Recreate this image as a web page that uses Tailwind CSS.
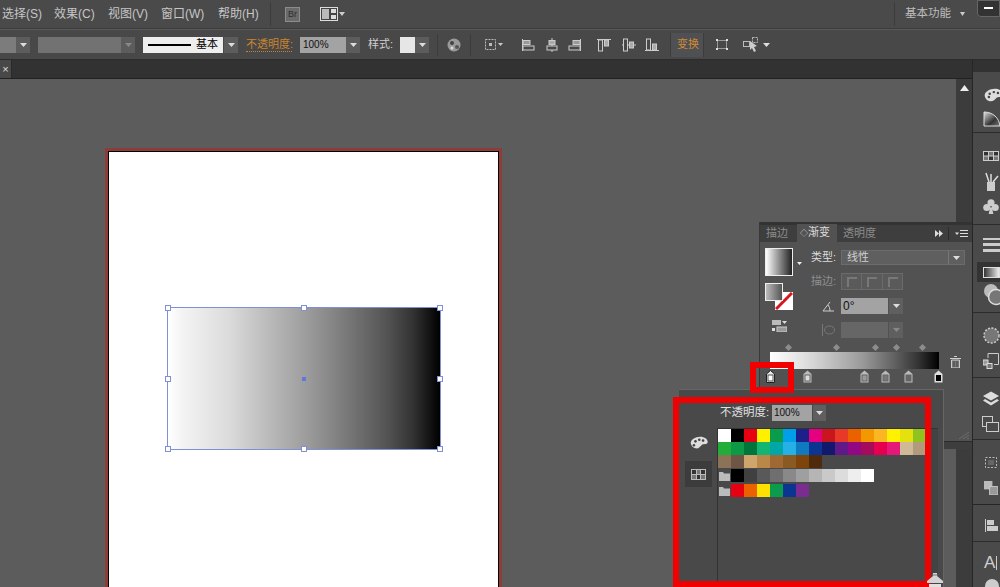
<!DOCTYPE html>
<html lang="zh-CN">
<head>
<meta charset="UTF-8" />
<title>Illustrator 渐变</title>
<script src="https://cdn.jsdelivr.net/npm/@tailwindcss/browser@4"></script>
</head>
<body class="bg-[#5c5c5c]">
<div class="relative w-[1000px] h-[587px] overflow-hidden flex flex-col bg-[#4a4a4a] text-[#cfcfcf] text-[11px] font-['Liberation_Sans','Noto_Sans_CJK_SC',sans-serif]">

  <!-- menu bar -->
  <div class="h-[29px] shrink-0 flex items-center bg-[#4a4a4a] border-b border-[#3a3a3a] text-[12px] text-[#c6c6c6]">
    <span class="ml-[2px] w-[52px]">选择(S)</span>
    <span class="w-[54px]">效果(C)</span>
    <span class="w-[53px]">视图(V)</span>
    <span class="w-[57px]">窗口(W)</span>
    <span class="w-[52px]">帮助(H)</span>
    <div class="w-px h-[24px] bg-[#3c3c3c]"></div>
    <div class="ml-[14px] w-[15px] h-[15px] bg-[#6a6a6a] border border-[#8c8c8c] flex items-center justify-center text-[9px] leading-none text-[#2e2e2e]">Br</div>
    <svg class="ml-[20px]" width="25" height="14" viewBox="0 0 25 14"><rect x=".5" y=".5" width="17" height="13" fill="#444" stroke="#ddd"/><rect x="2" y="2" width="7" height="10" fill="#bbb"/><rect x="11" y="2" width="5" height="4" fill="#ddd"/><rect x="11" y="8" width="5" height="4" fill="#ddd"/><path d="M19 5h6l-3 4z" fill="#ccc"/></svg>
    <div class="ml-auto w-px h-[24px] bg-[#3c3c3c]"></div>
    <span class="ml-[10px] w-[45px] text-[11.5px] whitespace-nowrap text-[#bdbdbd]">基本功能</span>
    <svg class="ml-[10px]" width="5" height="4" viewBox="0 0 5 4"><path d="M0 0h5L2.500 4z" fill="#ccc"/></svg>
    <div class="ml-[12px] w-[23px] h-[17px] -mt-[12px] bg-[#333] border border-[#666] rounded-bl-sm flex items-center justify-center"><div class="w-[9px] h-[2px] bg-white"></div></div>
  </div>

  <!-- options bar -->
  <div class="h-[31px] shrink-0 flex items-center bg-[#484848] border-t border-[#5a5a5a] border-b-[#2c2c2c] border-b">
    <div class="w-[16px] h-[16px] bg-[#7c7c7c]"></div>
    <div class="w-[14px] h-[16px] bg-[#5c5c5c] flex items-center justify-center"><svg width="7" height="4"><path d="M0 0h7L3.500 4z" fill="#ddd"/></svg></div>
    <div class="ml-[8px] w-[83px] h-[16px] bg-[#727272]"></div>
    <div class="w-[14px] h-[16px] bg-[#5c5c5c] flex items-center justify-center"><svg width="7" height="4"><path d="M0 0h7L3.500 4z" fill="#888"/></svg></div>
    <div class="ml-[8px] w-[80px] h-[16px] bg-[#eeeeee] flex items-center text-black">
      <div class="ml-[5px] w-[43px] h-[2px] bg-black"></div>
      <span class="ml-[5px]">基本</span>
    </div>
    <div class="ml-px w-[14px] h-[16px] bg-[#5c5c5c] flex items-center justify-center"><svg width="7" height="4"><path d="M0 0h7L3.500 4z" fill="#ddd"/></svg></div>
    <span class="ml-[8px] w-[46px] text-[#c8842f] border-b border-dotted border-[#c8842f] leading-[13px] whitespace-nowrap">不透明度:</span>
    <div class="ml-[8px] w-[46px] h-[16px] bg-[#a3a3a3] text-[#111] text-[10px] leading-[16px] pl-[3px]">100%</div>
    <div class="w-[14px] h-[16px] bg-[#5c5c5c] flex items-center justify-center"><svg width="7" height="4"><path d="M0 0h7L3.500 4z" fill="#ddd"/></svg></div>
    <span class="ml-[8px] w-[32px] text-[#cfcfcf]">样式:</span>
    <div class="w-[15px] h-[16px] bg-[#e6e6e6]"></div>
    <div class="w-[14px] h-[16px] bg-[#5c5c5c] flex items-center justify-center"><svg width="7" height="4"><path d="M0 0h7L3.500 4z" fill="#ddd"/></svg></div>
    <div class="ml-[8px] w-px h-[22px] bg-[#3c3c3c]"></div>
    <svg class="ml-[9px]" width="14" height="14" viewBox="0 0 14 14"><circle cx="7" cy="7" r="6.500" fill="#9a9a9a"/><circle cx="5" cy="5" r="2" fill="#444"/><circle cx="10" cy="9" r="2" fill="#555"/><circle cx="5" cy="10" r="1.500" fill="#ddd"/></svg>
    <div class="ml-[9px] w-px h-[22px] bg-[#3c3c3c]"></div>
    <svg class="ml-[13px]" width="20" height="13" viewBox="0 0 20 13"><rect x="1.500" y="1.500" width="10" height="10" fill="none" stroke="#bbb" stroke-dasharray="2 1"/><rect x="5" y="5" width="3" height="3" fill="#bbb"/><path d="M14 5h5l-2.500 3z" fill="#ccc"/></svg>
    <!-- align -->
    <svg class="ml-[17px]" width="14" height="14" viewBox="0 0 14 14"><path d="M1.500 1v12" stroke="#ccc"/><rect x="2" y="2.500" width="7" height="4" fill="#999" stroke="#ccc"/><rect x="2" y="8" width="11" height="4" fill="none" stroke="#ccc"/></svg>
    <svg class="ml-[10px]" width="14" height="14" viewBox="0 0 14 14"><path d="M7 0v14" stroke="#ccc"/><rect x="4" y="2.500" width="6" height="4" fill="#aaa" stroke="#ccc"/><rect x="2" y="8" width="10" height="4" fill="#484848" stroke="#ccc"/></svg>
    <svg class="ml-[9px]" width="14" height="14" viewBox="0 0 14 14"><path d="M12.500 1v12" stroke="#ccc"/><rect x="5" y="2.500" width="7" height="4" fill="#999" stroke="#ccc"/><rect x="1" y="8" width="11" height="4" fill="none" stroke="#ccc"/></svg>
    <svg class="ml-[15px]" width="14" height="14" viewBox="0 0 14 14"><path d="M0 1.500h14" stroke="#ccc"/><rect x="1.500" y="2" width="4" height="11" fill="none" stroke="#ccc"/><rect x="7.500" y="2" width="4" height="6" fill="#aaa" stroke="#ccc"/></svg>
    <svg class="ml-[11px]" width="14" height="14" viewBox="0 0 14 14"><path d="M0 7h14" stroke="#ccc"/><rect x="1.500" y="1" width="4" height="12" fill="#484848" stroke="#ccc"/><rect x="7.500" y="4" width="4" height="6" fill="#aaa" stroke="#ccc"/></svg>
    <svg class="ml-[9px]" width="14" height="14" viewBox="0 0 14 14"><path d="M0 12.500h14" stroke="#ccc"/><rect x="1.500" y="1" width="4" height="11" fill="none" stroke="#ccc"/><rect x="7.500" y="6" width="4" height="6" fill="#aaa" stroke="#ccc"/></svg>
    <div class="ml-[11px] w-[34px] h-[24px] shrink-0 bg-[#4e5054] border-x border-[#3c3c3c] flex items-center pl-[6px] text-[#d08a34] whitespace-nowrap">变换</div>
    <svg class="ml-[11px]" width="14" height="13" viewBox="0 0 14 13"><rect x="2.500" y="2.500" width="9" height="8" fill="none" stroke="#999"/><rect x="1" y="1" width="2" height="2" fill="#ddd"/><rect x="11" y="1" width="2" height="2" fill="#ddd"/><rect x="1" y="10" width="2" height="2" fill="#ddd"/><rect x="11" y="10" width="2" height="2" fill="#ddd"/></svg>
    <svg class="ml-[14px]" width="16" height="15" viewBox="0 0 16 15"><rect x=".5" y="4.500" width="6" height="5" fill="none" stroke="#bbb"/><rect x="9.500" y=".5" width="5" height="5" fill="none" stroke="#bbb" stroke-dasharray="2 1"/><path d="M7 4l7 5-3 1 2 4-2 1-2-4-2 2z" fill="#ccc"/></svg>
    <svg class="ml-[4px]" width="7" height="4"><path d="M0 0h7L3.500 4z" fill="#ddd"/></svg>
  </div>

  <!-- workspace -->
  <div class="flex-1 flex min-h-0">
    <div class="w-[972px] shrink-0 flex flex-col">
      <div class="h-[19px] shrink-0 flex bg-[#323232] border-b border-[#222]">
        <div class="w-[12px] h-full bg-[#484848] border-r border-[#2a2a2a] flex items-center justify-center text-[11px] leading-none text-[#ddd]">×</div>
      </div>
      <div class="flex-1 flex min-h-0">
        <div class="w-[956px] relative bg-[#5c5c5c] overflow-hidden">
          <!-- artboard: top 79 of page -->
          <div class="absolute left-[105px] top-[69px] w-[397px] h-[460px] border-x-[3px] border-t-[3px] border-[#8e3c3a] bg-black pt-px px-px">
            <div class="w-full h-full bg-white"></div>
          </div>
          <!-- selected rectangle -->
          <div class="absolute left-[167px] top-[228px] w-[274px] h-[143px] border border-[#7f8fd8] bg-[linear-gradient(to_right,#fff_0%,#f4f4f4_5%,#dcdcdc_22%,#b8b8b8_38%,#9a9a9a_52%,#787878_66%,#555_80%,#333_90%,#000_100%)]">
            <div class="absolute -left-[3px] -top-[3px] w-[6px] h-[6px] bg-white border border-[#7f8fd8]"></div>
            <div class="absolute left-[133px] -top-[3px] w-[6px] h-[6px] bg-white border border-[#7f8fd8]"></div>
            <div class="absolute -right-[3px] -top-[3px] w-[6px] h-[6px] bg-white border border-[#7f8fd8]"></div>
            <div class="absolute -left-[3px] top-[68px] w-[6px] h-[6px] bg-white border border-[#7f8fd8]"></div>
            <div class="absolute -right-[3px] top-[68px] w-[6px] h-[6px] bg-white border border-[#7f8fd8]"></div>
            <div class="absolute -left-[3px] -bottom-[3px] w-[6px] h-[6px] bg-white border border-[#7f8fd8]"></div>
            <div class="absolute left-[133px] -bottom-[3px] w-[6px] h-[6px] bg-white border border-[#7f8fd8]"></div>
            <div class="absolute -right-[3px] -bottom-[3px] w-[6px] h-[6px] bg-white border border-[#7f8fd8]"></div>
            <div class="absolute left-[134px] top-[69px] w-[4px] h-[4px] bg-[#5f78e0]"></div>
          </div>
        </div>
        <!-- vertical scrollbar -->
        <div class="w-[16px] bg-[#3c3c3c] flex justify-center pt-[6px]">
          <svg width="9" height="6"><path d="M0 6h9L4.500 0z" fill="#eee"/></svg>
        </div>
      </div>
    </div>
    <div class="w-px bg-[#262626] shrink-0"></div>

    <!-- right dock -->
    <div class="flex-1 flex flex-col overflow-hidden">
      <div class="h-[12px] bg-[#323232] shrink-0"></div>
      <div class="flex flex-col items-start pl-[9px] h-[61px] border-b border-[#2c2c2c] pt-[16px] shrink-0">
        <svg width="22" height="14" viewBox="0 0 24 17" class="shrink-0"><path d="M2 10C1 5 8 1 14 1s10 3 10 7-6 2-8 4-4 5-8 4-5-3-6-6z" fill="#ddd"/><circle cx="8" cy="7" r="1.500" fill="#444"/><circle cx="13" cy="5" r="1.500" fill="#444"/><circle cx="18" cy="6" r="1.500" fill="#444"/><circle cx="7" cy="11" r="1.500" fill="#444"/></svg>
        <svg class="mt-[9px] ml-px shrink-0" width="18" height="16" viewBox="0 0 18 16"><defs><linearGradient id="q" x1="0" y1="0" x2="1" y2="1"><stop offset="0" stop-color="#ddd"/><stop offset=".6" stop-color="#333"/><stop offset="1" stop-color="#777"/></linearGradient></defs><path d="M1 1c9 0 15 6 16 14H1z" fill="url(#q)" stroke="#ddd"/></svg>
      </div>
      <div class="flex flex-col items-start pl-[10px] h-[92px] border-b border-[#2c2c2c] pt-[18px] shrink-0">
        <svg width="16" height="10" viewBox="0 0 16 10" class="shrink-0"><rect width="16" height="10" fill="#ccc"/><rect x="1" y="1" width="4" height="3.500" fill="#333"/><rect x="6" y="1" width="4" height="3.500" fill="#777"/><rect x="11" y="1" width="4" height="3.500" fill="#333"/><rect x="1" y="5.500" width="4" height="3.500" fill="#777"/><rect x="6" y="5.500" width="4" height="3.500" fill="#333"/><rect x="11" y="5.500" width="4" height="3.500" fill="#777"/></svg>
        <svg class="mt-[11px] shrink-0" width="16" height="19" viewBox="0 0 16 19"><rect x="4" y="10" width="8" height="9" fill="#ccc"/><path d="M6 10L3 1M8 10V2M10 10l5-6" stroke="#ddd" stroke-width="1.500"/></svg>
        <svg class="mt-[8px] shrink-0" width="16" height="15" viewBox="0 0 17 16"><circle cx="8.500" cy="4" r="3.800" fill="#ccc"/><circle cx="4" cy="9" r="3.800" fill="#ccc"/><circle cx="13" cy="9" r="3.800" fill="#ccc"/><path d="M7.500 9h2l1.500 7H6z" fill="#ccc"/></svg>
      </div>
      <div class="flex flex-col items-start h-[88px] border-b border-[#2c2c2c] pt-[13px] shrink-0">
        <div class="ml-[10px] w-[17px] h-[14px] flex flex-col justify-between shrink-0"><div class="h-[2px] bg-[#ccc]"></div><div class="h-[3px] bg-[#ccc]"></div><div class="h-[3px] bg-[#ccc]"></div></div>
        <div class="mt-[10px] ml-[4px] w-[23px] h-[20px] bg-[#333] flex items-center pl-[6px] shrink-0"><div class="w-[17px] h-[11px] border border-[#ddd] bg-[linear-gradient(to_right,#333,#eee)]"></div></div>
        <svg class="mt-px ml-[10px] shrink-0" width="19" height="23" viewBox="0 0 19 23"><circle cx="8" cy="8" r="7" fill="#bbb"/><circle cx="13" cy="14" r="7.500" fill="#777" stroke="#ddd" stroke-width="1.500"/></svg>
      </div>
      <div class="flex flex-col items-start pl-[10px] h-[65px] border-b border-[#2c2c2c] pt-[14px] shrink-0">
        <svg width="17" height="17" viewBox="0 0 17 17" class="shrink-0"><circle cx="8.500" cy="8.500" r="7.500" fill="#777" stroke="#ccc" stroke-width="1.500" stroke-dasharray="2 1.500"/></svg>
        <svg class="mt-[9px] shrink-0" width="16" height="16" viewBox="0 0 16 16"><path d="M5 5V.5h10.500v11H11" fill="none" stroke="#ccc"/><rect x="0" y="7" width="5" height="5" fill="#999" stroke="#ddd"/><rect x="4" y="10.500" width="5" height="5" fill="#777" stroke="#ddd"/></svg>
      </div>
      <div class="flex flex-col items-start pl-[10px] h-[62px] border-b border-[#2c2c2c] pt-[13px] shrink-0">
        <svg width="16" height="15" viewBox="0 0 16 14" class="shrink-0"><path d="M8 0l8 4.500-8 4.500-8-4.500z" fill="#ddd"/><path d="M2 7.500l6 3.500 6-3.500 2 1.500-8 5-8-5z" fill="#ddd"/></svg>
        <svg class="mt-[10px] -ml-px shrink-0" width="17" height="16" viewBox="0 0 17 16"><rect x=".5" y=".5" width="10" height="10" fill="none" stroke="#ccc"/><rect x="4.500" y="6.500" width="12" height="9" fill="#4a4a4a" stroke="#ccc"/></svg>
      </div>
      <div class="flex flex-col items-start pl-[11px] h-[65px] border-b border-[#262626] pt-[16px] shrink-0">
        <svg width="14" height="13" viewBox="0 0 14 13" class="shrink-0"><rect x="1.500" y="1.500" width="11" height="10" fill="none" stroke="#bbb" stroke-dasharray="2 1.500"/><rect x="4" y="4" width="6" height="5" fill="#666"/></svg>
        <svg class="mt-[12px] shrink-0" width="14" height="14" viewBox="0 0 15 15"><rect x="0" y="0" width="9" height="9" fill="#bbb"/><rect x="6" y="6" width="9" height="9" fill="#999" stroke="#ccc"/></svg>
      </div>
      <div class="flex flex-col items-start pl-[12px] h-[37px] border-b border-[#2c2c2c] pt-[14px] shrink-0">
        <svg width="13" height="13" viewBox="0 0 13 13" class="shrink-0"><path d="M.5 0v13" stroke="#ccc"/><rect x="2" y="1" width="7" height="5" fill="#ccc"/><rect x="2" y="7" width="11" height="5" fill="#ccc"/></svg>
      </div>
      <div class="pl-[11px] pt-[9px] flex items-center text-[17px] leading-[24px] text-[#cfcfcf] shrink-0">A<div class="w-px h-[14px] bg-[#ccc] ml-px"></div></div>
      <div class="ml-[12px] mt-[4px] w-[14px] h-[8px] bg-[#ccc] rounded-t-full shrink-0"></div>
    </div>
  </div>

  <!-- gradient panel -->
  <div class="absolute left-[759px] top-[222px] w-[213px] h-[219px] bg-[#525252] border-l border-[#3a3a3a] flex flex-col">
    <div class="h-[20px] shrink-0 flex items-end bg-[#3e3e3e] border-t-[3px] border-[#333]">
      <span class="w-[37px] pl-[6px] leading-[17px] text-[#8c8c8c] whitespace-nowrap">描边</span>
      <span class="w-[40px] pl-[3px] leading-[17px] bg-[#525252] text-[#dcdcdc] whitespace-nowrap"><span class="text-[8px]">◇</span>渐变</span>
      <span class="ml-[6px] leading-[17px] text-[#8c8c8c] whitespace-nowrap">透明度</span>
      <svg class="ml-auto mb-[5px]" width="8" height="7"><path d="M0 0l4 3.500L0 7zM4 0l4 3.500L4 7z" fill="#ddd"/></svg>
      <div class="ml-[5px] mb-[2px] w-px h-[13px] bg-[#2c2c2c]"></div>
      <svg class="ml-[6px] mr-[4px] mb-[4px]" width="13" height="8"><path d="M0 2.500h4L2 5z" fill="#ddd"/><path d="M5 .5h8M5 3.500h8M5 6.500h8" stroke="#ddd"/></svg>
    </div>
    <div class="flex h-[92px] mt-[6px] ml-[5px] shrink-0">
      <div class="w-[43px] shrink-0">
        <div class="flex items-center">
          <div class="w-[28px] h-[28px] border border-[#eee] bg-[linear-gradient(to_right,#fff,#222)]"></div>
          <svg class="ml-[4px] mt-[2px]" width="5" height="3"><path d="M0 0h5L2.500 3z" fill="#eee"/></svg>
        </div>
        <div class="relative h-[27px] mt-[7px]">
          <svg class="absolute left-[10px] top-[9px]" width="18" height="18" viewBox="0 0 18 18"><rect width="18" height="18" fill="#fff"/><path d="M1 17L17 1" stroke="#d8141e" stroke-width="3"/></svg>
          <div class="absolute left-0 top-0 w-[18px] h-[18px] border border-[#eee] bg-[linear-gradient(to_right,#bbb,#555)]"></div>
        </div>
        <svg class="ml-[7px] mt-[10px]" width="15" height="12" viewBox="0 0 15 12"><rect x="0" y="0" width="9" height="5" fill="#bbb"/><rect x="5" y="7" width="10" height="5" fill="#999" stroke="#ccc"/><rect x="0" y="8" width="3" height="3" fill="#ddd"/><path d="M10 1h5l-2.500 3z" fill="#ddd"/></svg>
      </div>
      <div class="flex-1">
        <div class="mt-[2px] h-[15px] flex items-center">
          <span class="w-[33px] whitespace-nowrap text-[#dcdcdc] pl-[3px]">类型:</span>
          <div class="w-[124px] h-[15px] bg-[#5f5f5f] border border-[#6c6c6c] flex items-center pl-[5px] text-[#cfcfcf]">线性<div class="ml-auto w-px h-[13px] bg-[#777]"></div><svg class="mx-[4px]" width="7" height="4"><path d="M0 0h7L3.500 4z" fill="#ddd"/></svg></div>
        </div>
        <div class="mt-[8px] h-[17px] flex items-center">
          <span class="w-[33px] whitespace-nowrap text-[#8e8e8e] pl-[3px]">描边:</span>
          <div class="flex">
            <div class="w-[21px] h-[17px] bg-[#5a5a5a] border border-[#6a6a6a] flex items-center justify-center"><div class="w-[10px] h-[10px] border-l-2 border-t-2 border-[#787878]"></div></div>
            <div class="w-[21px] h-[17px] bg-[#5a5a5a] border-y border-r border-[#6a6a6a] flex items-center justify-center"><div class="w-[10px] h-[10px] border-l-2 border-t-2 border-[#787878]"></div></div>
            <div class="w-[20px] h-[17px] bg-[#5a5a5a] border-y border-r border-[#6a6a6a] flex items-center justify-center"><div class="w-[10px] h-[10px] border-l-2 border-t-2 border-[#787878]"></div></div>
          </div>
        </div>
        <div class="mt-[8px] h-[16px] flex items-center">
          <svg class="ml-[14px] mr-[7px]" width="12" height="11" viewBox="0 0 12 11"><path d="M1 10h11M1 10L8 1" stroke="#ccc" fill="none"/><path d="M6 4q2 2 2 6" stroke="#ccc" fill="none"/></svg>
          <div class="w-[47px] h-[16px] bg-[#a3a3a3] text-[#111] text-[12px] leading-[16px] pl-[2px]">0°</div>
          <div class="ml-px w-[14px] h-[16px] bg-[#5f5f5f] flex items-center justify-center"><svg width="7" height="4"><path d="M0 0h7L3.500 4z" fill="#ddd"/></svg></div>
        </div>
        <div class="mt-[8px] h-[16px] flex items-center">
          <svg class="ml-[13px] mr-[6px]" width="14" height="12" viewBox="0 0 14 12"><path d="M1.500 0v12" stroke="#777"/><ellipse cx="8.500" cy="6" rx="5" ry="4" fill="none" stroke="#777"/></svg>
          <div class="w-[47px] h-[16px] bg-[#666]"></div>
          <div class="ml-px w-[14px] h-[16px] bg-[#5f5f5f] flex items-center justify-center"><svg width="7" height="4"><path d="M0 0h7L3.500 4z" fill="#888"/></svg></div>
        </div>
      </div>
    </div>
    <!-- midpoints -->
    <div class="relative h-[6px] mt-[5px] shrink-0">
      <div class="absolute left-[26px] top-0 w-[5px] h-[5px] rotate-45 bg-[#8c8c8c]"></div>
      <div class="absolute left-[74px] top-0 w-[5px] h-[5px] rotate-45 bg-[#8c8c8c]"></div>
      <div class="absolute left-[113px] top-0 w-[5px] h-[5px] rotate-45 bg-[#8c8c8c]"></div>
      <div class="absolute left-[134px] top-0 w-[5px] h-[5px] rotate-45 bg-[#8c8c8c]"></div>
      <div class="absolute left-[160px] top-0 w-[5px] h-[5px] rotate-45 bg-[#8c8c8c]"></div>
    </div>
    <div class="flex items-start mt-px ml-[10px] shrink-0">
      <div class="w-[169px] h-[17px] bg-[linear-gradient(to_right,#fff_0%,#ddd_22%,#999_55%,#666_72%,#333_88%,#000_100%)]"></div>
      <svg class="ml-[11px] mt-[4px]" width="11" height="12" viewBox="0 0 11 12"><path d="M4 .5h3M0 2.500h11" stroke="#ccc"/><path d="M1.500 4h8v8h-8z" fill="#777" stroke="#ccc"/><path d="M4 5v6M7 5v6" stroke="#444"/></svg>
    </div>
    <!-- gradient stops -->
    <div class="relative h-[14px] mt-px shrink-0">
      <svg class="absolute left-[6px] top-0" width="9" height="13" viewBox="0 0 9 13"><path d="M.5 4L4.500.5 8.500 4v8.500h-8z" fill="#e8e8e8" stroke="#222"/><rect x="2" y="5" width="5" height="6" fill="#fff" stroke="#555"/></svg>
      <svg class="absolute left-[43px] top-0" width="9" height="13" viewBox="0 0 9 13"><path d="M.5 4L4.500.5 8.500 4v8.500h-8z" fill="#bbb"/><rect x="2" y="5" width="5" height="6" fill="#ddd" stroke="#666"/></svg>
      <svg class="absolute left-[100px] top-0" width="9" height="13" viewBox="0 0 9 13"><path d="M.5 4L4.500.5 8.500 4v8.500h-8z" fill="#bbb"/><rect x="2" y="5" width="5" height="6" fill="#999" stroke="#666"/></svg>
      <svg class="absolute left-[121px] top-0" width="9" height="13" viewBox="0 0 9 13"><path d="M.5 4L4.500.5 8.500 4v8.500h-8z" fill="#bbb"/><rect x="2" y="5" width="5" height="6" fill="#777" stroke="#666"/></svg>
      <svg class="absolute left-[144px] top-0" width="9" height="13" viewBox="0 0 9 13"><path d="M.5 4L4.500.5 8.500 4v8.500h-8z" fill="#bbb"/><rect x="2" y="5" width="5" height="6" fill="#666" stroke="#666"/></svg>
      <svg class="absolute left-[174px] top-0" width="9" height="13" viewBox="0 0 9 13"><path d="M.5 4L4.500.5 8.500 4v8.500h-8z" fill="#ddd"/><rect x="2" y="5" width="5" height="6" fill="#000"/></svg>
    </div>
  </div>
  <!-- panel bottom strip and resize grip -->
  <div class="absolute left-[944px] top-[441px] w-[28px] h-[8px] bg-[#3e3e3e] border-t border-[#2c2c2c]"></div>
  <svg class="absolute left-[958px] top-[431px]" width="12" height="9" viewBox="0 0 12 9"><path d="M1 8L11 1M5 8l6-4M9 8l2-1" stroke="#6c6c6c"/></svg>

  <!-- swatch popup -->
  <div class="absolute left-[679px] top-[389px] w-[265px] h-[198px] bg-[#494949] border-t border-r border-[#666] flex">
    <div class="w-[38px] shrink-0 flex flex-col items-center pt-[46px]">
      <svg width="19" height="13" viewBox="0 0 24 17"><path d="M2 10C1 5 8 1 14 1s10 3 10 7-6 2-8 4-4 5-8 4-5-3-6-6z" fill="#ddd"/><circle cx="8" cy="7" r="1.700" fill="#444"/><circle cx="13" cy="5" r="1.700" fill="#444"/><circle cx="18" cy="6" r="1.700" fill="#444"/><circle cx="6" cy="12" r="1.700" fill="#444"/></svg>
      <div class="mt-[12px] w-[27px] h-[26px] bg-[#3c3c3c] flex items-center justify-center">
        <svg width="15" height="11" viewBox="0 0 15 11"><rect width="15" height="11" fill="#bbb"/><rect x="1" y="1" width="4" height="4" fill="#333"/><rect x="6" y="1" width="3" height="4" fill="#777"/><rect x="10" y="1" width="4" height="4" fill="#333"/><rect x="1" y="6" width="4" height="4" fill="#777"/><rect x="6" y="6" width="3" height="4" fill="#333"/><rect x="10" y="6" width="4" height="4" fill="#777"/></svg>
      </div>
    </div>
    <div class="flex-1 flex flex-col pt-[15px]">
      <div class="flex items-center h-[16px] shrink-0 pl-[3px]">
        <span class="w-[52px] text-[11.5px] text-[#e0e0e0] whitespace-nowrap">不透明度:</span>
        <div class="w-[40px] h-[16px] bg-[#a3a3a3] text-[#111] text-[10px] leading-[16px] pl-[2px]">100%</div>
        <div class="ml-px w-[13px] h-[16px] bg-[#5f5f5f] flex items-center justify-center"><svg width="7" height="4"><path d="M0 0h7L3.500 4z" fill="#ddd"/></svg></div>
      </div>
      <div class="mt-[7px] w-[221px] flex-1 border-l border-t border-[#333] flex">
        <div class="w-[208px] shrink-0 pl-0">
          <div class="grid grid-cols-[repeat(16,13px)] auto-rows-[13px]">
            <div class="bg-white"></div><div class="bg-black"></div><div class="bg-[#e60012]"></div><div class="bg-[#fff000]"></div><div class="bg-[#0a9b4c]"></div><div class="bg-[#00a0e9]"></div><div class="bg-[#1d2088]"></div><div class="bg-[#e4007f]"></div><div class="bg-[#c9151e]"></div><div class="bg-[#e83828]"></div><div class="bg-[#eb6100]"></div><div class="bg-[#f39800]"></div><div class="bg-[#fbb721]"></div><div class="bg-[#fff100]"></div><div class="bg-[#e4e10f]"></div><div class="bg-[#8fc31f]"></div>
            <div class="bg-[#22ac38]"></div><div class="bg-[#0c9a47]"></div><div class="bg-[#00753b]"></div><div class="bg-[#13b573]"></div><div class="bg-[#00a7a6]"></div><div class="bg-[#25b0e6]"></div><div class="bg-[#0f7ac0]"></div><div class="bg-[#0c3591]"></div><div class="bg-[#13196a]"></div><div class="bg-[#601986]"></div><div class="bg-[#920783]"></div><div class="bg-[#a40b5d]"></div><div class="bg-[#e5004f]"></div><div class="bg-[#e5177b]"></div><div class="bg-[#cfb997]"></div><div class="bg-[#b29a7c]"></div>
            <div class="bg-[#8c7257]"></div><div class="bg-[#6f5644]"></div><div class="bg-[#cfa56d]"></div><div class="bg-[#b98849]"></div><div class="bg-[#a06934]"></div><div class="bg-[#8a5a23]"></div><div class="bg-[#7f4409]"></div><div class="bg-[#4f2a0d]"></div>
          </div>
          <div class="mt-[1px] flex h-[13px] items-center">
            <svg class="w-[13px]" width="13" height="10" viewBox="0 0 13 10"><path d="M1 1h4l1 1.500h6V10H1z" fill="#bbb"/></svg>
            <div class="w-[13px] h-[13px] bg-black"></div><div class="w-[13px] h-[13px] bg-[#404040]"></div><div class="w-[13px] h-[13px] bg-[#595959]"></div><div class="w-[13px] h-[13px] bg-[#6f6f6f]"></div><div class="w-[13px] h-[13px] bg-[#898989]"></div><div class="w-[13px] h-[13px] bg-[#9f9f9f]"></div><div class="w-[13px] h-[13px] bg-[#b5b5b5]"></div><div class="w-[13px] h-[13px] bg-[#c9c9c9]"></div><div class="w-[13px] h-[13px] bg-[#dcdcdc]"></div><div class="w-[13px] h-[13px] bg-[#eeeeee]"></div><div class="w-[13px] h-[13px] bg-white"></div>
          </div>
          <div class="mt-[2px] flex h-[13px] items-center">
            <svg class="w-[13px]" width="13" height="10" viewBox="0 0 13 10"><path d="M1 1h4l1 1.500h6V10H1z" fill="#bbb"/></svg>
            <div class="w-[13px] h-[13px] bg-[#e60012]"></div><div class="w-[13px] h-[13px] bg-[#eb6100]"></div><div class="w-[13px] h-[13px] bg-[#ffe100]"></div><div class="w-[13px] h-[13px] bg-[#0a9b4c]"></div><div class="w-[13px] h-[13px] bg-[#0c3591]"></div><div class="w-[13px] h-[13px] bg-[#7b2c91]"></div>
          </div>
        </div>
        <div class="flex-1 bg-[#434343] border-l border-[#333]"></div>
      </div>
    </div>
  </div>

  <!-- red annotation boxes -->
  <div class="absolute left-[750px] top-[362px] w-[44px] h-[31px] border-[6px] border-[#f00000]"></div>
  <div class="absolute left-[673px] top-[397px] w-[258px] h-[190px] border-[6px] border-[#f00000]"></div>
  <!-- corner icon sits over the red box -->
  <svg class="absolute left-[927px] top-[573px]" width="16" height="14" viewBox="0 0 16 14"><path d="M6 0h4v3l6 5v2H0V8l6-5z" fill="#d4d4d4"/><path d="M5 2h6" stroke="#777"/><rect x="2" y="11" width="12" height="3" fill="#e0e0e0"/></svg>
</div>
</body>
</html>
